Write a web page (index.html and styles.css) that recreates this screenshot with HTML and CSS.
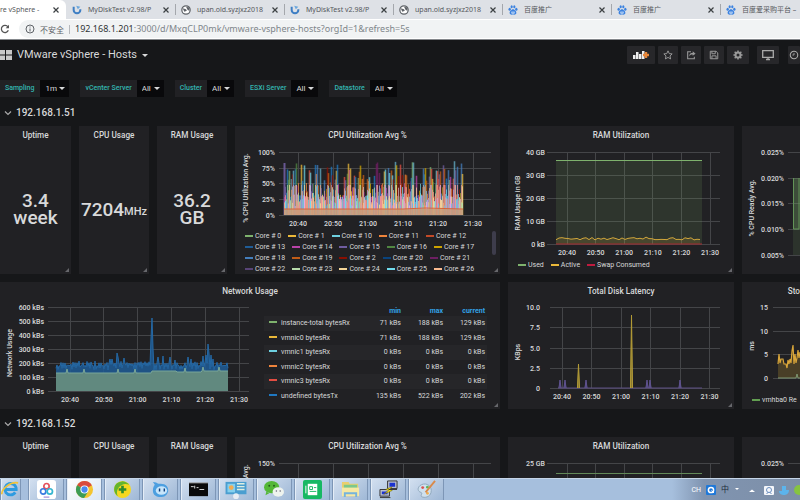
FILE: index.html
```html
<!DOCTYPE html>
<html lang="en">
<head>
<meta charset="utf-8">
<title>VMware vSphere - Hosts</title>
<link rel="stylesheet" href="styles.css">
</head>
<body>
<svg class="defs" aria-hidden="true">
  <symbol id="swirl" viewBox="0 0 12 12"><path d="M2 2v4a4 4 0 0 0 8 0V5" fill="none" stroke="#3f7fc4" stroke-width="2.4"/><path d="M5 1l5 1-3 3z" fill="#6aa7dd"/></symbol>
  <symbol id="globe" viewBox="0 0 12 12"><circle cx="6" cy="6" r="5" fill="#fff" stroke="#5f6368" stroke-width="1.5"/><path d="M2 4l4 1 1 2-3 1zM6 2l4 1v4L8 6z" fill="#5f6368"/></symbol>
  <symbol id="paw" viewBox="0 0 12 12"><g fill="#3b82e0"><ellipse cx="2" cy="5.2" rx="1.4" ry="1.8"/><ellipse cx="4.4" cy="2.2" rx="1.3" ry="1.8"/><ellipse cx="7.6" cy="2.2" rx="1.3" ry="1.8"/><ellipse cx="10" cy="5.2" rx="1.4" ry="1.8"/><path d="M6 5c2 0 4.500 3 4 5s-2.500 1.500-4 1.500S2.500 12 2 10s2-5 4-5z"/></g><path d="M4.500 8.500h3M4.500 8v2h3V8" fill="none" stroke="#fff" stroke-width=".7"/></symbol>
  <symbol id="close" viewBox="0 0 8 8"><path d="M1.500 1.500l5 5M6.500 1.500l-5 5" stroke="#3c4043" stroke-width="1.200"/></symbol>
  <symbol id="chevron" viewBox="0 0 8 6"><path d="M1 1.500l3 3 3-3" fill="none" stroke="#aaa" stroke-width="1.200"/></symbol>
</svg>

<nav class="tabs" aria-label="Browser tabs">
  <a class="tab active" href="#"><span class="tab-text">re vSphere -</span><svg class="x"><use href="#close"/></svg></a>
  <a class="tab" href="#"><svg class="fav"><use href="#swirl"/></svg><span class="tab-text">MyDiskTest v2.98/P</span><svg class="x"><use href="#close"/></svg></a>
  <a class="tab" href="#"><svg class="fav"><use href="#globe"/></svg><span class="tab-text">upan.old.syzjxz2018</span><svg class="x"><use href="#close"/></svg></a>
  <a class="tab" href="#"><svg class="fav"><use href="#swirl"/></svg><span class="tab-text">MyDiskTest v2.98/P</span><svg class="x"><use href="#close"/></svg></a>
  <a class="tab" href="#"><svg class="fav"><use href="#globe"/></svg><span class="tab-text">upan.old.syzjxz2018</span><svg class="x"><use href="#close"/></svg></a>
  <a class="tab" href="#"><svg class="fav"><use href="#paw"/></svg><span class="tab-text">百度推广</span><svg class="x"><use href="#close"/></svg></a>
  <a class="tab" href="#"><svg class="fav"><use href="#paw"/></svg><span class="tab-text">百度推广</span><svg class="x"><use href="#close"/></svg></a>
  <a class="tab" href="#"><svg class="fav"><use href="#paw"/></svg><span class="tab-text">百度爱采购平台 –</span></a>
</nav>

<div class="address">
  <svg class="reload" viewBox="0 0 12 12"><path d="M9.500 3.500A4.300 4.300 0 1 0 10 7.500" fill="none" stroke="#555" stroke-width="1.500"/><path d="M10.800 1v4h-4z" fill="#555"/></svg>
  <div class="omnibox">
    <svg class="info" viewBox="0 0 10 10"><circle cx="5" cy="5" r="4" fill="none" stroke="#5f6368"/><path d="M5 4.500v3M5 2.500v1" stroke="#5f6368"/></svg>
    <span class="insecure">不安全</span>
    <span class="url"><b>192.168.1.201</b>:3000/d/MxqCLP0mk/vmware-vsphere-hosts?orgId=1&amp;refresh=5s</span>
  </div>
</div>

<main class="dash">
  <header class="top">
    <svg class="grid-icon" viewBox="0 0 12 12"><path d="M0 1h5v4.500H0zM6 1h6v4.500H6zM0 6.500h5V11H0zM6 6.500h6V11H6z" fill="#c8c8c8"/></svg>
    <h1>VMware vSphere - Hosts</h1><span class="caret"></span>
    <div class="tools">
      <button class="wide" aria-label="Add panel"><svg viewBox="0 0 18 10"><path d="M1 9V5h2.500v4zM4 9V2h2.500v7zM7 9V4h2.500v5zM10 9V1h2.500v8z" fill="#eee"/><path d="M14 2v6M11 5h6" stroke="#e8873a" stroke-width="2.400"/></svg></button>
      <button aria-label="Star"><svg viewBox="0 0 12 12"><path d="M6 1l1.500 3.300 3.500.4-2.600 2.400.7 3.600L6 8.900l-3.100 1.800.7-3.600L1 4.700l3.500-.4z" fill="none" stroke="#aaa"/></svg></button>
      <button aria-label="Share"><svg viewBox="0 0 12 12"><path d="M6 2H2v8.500h8V8" fill="none" stroke="#999" stroke-width="1.300"/><path d="M4 7.500C4 4 6 3.500 8 3.500V1.500L11.500 4.500 8 7V5.500C6 5.500 5 6 4 7.500z" fill="#999"/></svg></button>
      <button aria-label="Save"><svg viewBox="0 0 12 12"><path d="M1.500 1.500h7l2 2v7h-9zM3.500 1.500v3h4v-3M3.500 10.500v-3.500h5v3.500" fill="none" stroke="#999" stroke-width="1.200"/></svg></button>
      <button class="mid" aria-label="Settings"><svg viewBox="0 0 12 12"><circle cx="6" cy="6" r="3" fill="none" stroke="#999" stroke-width="2.400"/><path d="M6 .5v2M6 9.500v2M.5 6h2M9.500 6h2M2 2l1.500 1.500M8.500 8.500L10 10M10 2L8.500 3.500M3.500 8.500L2 10" stroke="#999" stroke-width="1.800"/></svg></button>
      <button class="apart" aria-label="Cycle view mode"><svg viewBox="0 0 12 12"><path d="M.7 1.700h10.600v6.600H.7zM4 10.500h4M6 8v2.500" fill="none" stroke="#aaa" stroke-width="1.300"/></svg></button>
      <button class="time" aria-label="Time range"><svg viewBox="0 0 12 12"><circle cx="6" cy="6" r="4.500" fill="none" stroke="#aaa" stroke-width="1.300"/><path d="M6 3.500V6h-2" fill="none" stroke="#aaa"/></svg></button>
    </div>
  </header>

  <form class="vars">
    <div class="var"><label for="v1">Sampling</label><span class="pick"><select id="v1"><option>1m</option></select></span></div>
    <div class="var"><label for="v2">vCenter Server</label><span class="pick"><select id="v2"><option>All</option></select></span></div>
    <div class="var"><label for="v3">Cluster</label><span class="pick"><select id="v3"><option>All</option></select></span></div>
    <div class="var"><label for="v4">ESXi Server</label><span class="pick"><select id="v4"><option>All</option></select></span></div>
    <div class="var"><label for="v5">Datastore</label><span class="pick"><select id="v5"><option>All</option></select></span></div>
  </form>

  <h2 class="row-title"><svg><use href="#chevron"/></svg>192.168.1.51</h2>
  <div class="panels">
    <section class="panel upper"><h3>Uptime</h3><p class="stat">3.4<br>week</p></section>
    <section class="panel upper"><h3>CPU Usage</h3><p class="stat">7204<small>MHz</small></p></section>
    <section class="panel upper"><h3>RAM Usage</h3><p class="stat">36.2<br>GB</p></section>
    <section class="panel upper"><h3>CPU Utilization Avg %</h3>
      <svg class="chart" id="cpu" viewBox="0 0 265 89"></svg>
      <div class="legend scroll"><ul id="cores"></ul><i class="thumb"></i></div>
    </section>
    <section class="panel upper"><h3>RAM Utilization</h3>
      <svg class="chart" id="ram" viewBox="0 0 226 118"></svg>
      <ul class="legend" id="ram-legend"></ul>
    </section>
    <section class="panel upper cut"><h3>&nbsp;</h3>
      <svg class="chart" id="ready" viewBox="0 0 58 132"></svg>
    </section>

    <section class="panel lower span4"><h3>Network Usage</h3>
      <div class="split">
        <svg class="chart" id="net" viewBox="0 0 260 110"></svg>
        <table>
          <thead><tr><th></th><th>min</th><th>max</th><th>current</th></tr></thead>
          <tbody id="net-rows"></tbody>
        </table>
      </div>
    </section>
    <section class="panel lower"><h3>Total Disk Latency</h3>
      <svg class="chart" id="disk" viewBox="0 0 226 110"></svg>
    </section>
    <section class="panel lower cut"><h3>Sto</h3>
      <svg class="chart" id="store" viewBox="0 0 58 97"></svg>
      <ul class="legend" id="store-legend"></ul>
    </section>
  </div>

  <h2 class="row-title"><svg><use href="#chevron"/></svg>192.168.1.52</h2>
  <div class="panels">
    <section class="panel upper"><h3>Uptime</h3></section>
    <section class="panel upper"><h3>CPU Usage</h3></section>
    <section class="panel upper"><h3>RAM Usage</h3></section>
    <section class="panel upper"><h3>CPU Utilization Avg %</h3><svg class="chart" id="cpu2" viewBox="0 0 265 89"></svg></section>
    <section class="panel upper"><h3>RAM Utilization</h3><svg class="chart" id="ram2" viewBox="0 0 226 118"></svg></section>
    <section class="panel upper cut"><h3>&nbsp;</h3><svg class="chart" id="ready2" viewBox="0 0 58 132"></svg></section>
  </div>
</main>

<footer class="taskbar">
  <button class="first" aria-label="Internet Explorer"><svg viewBox="0 0 20 20"><path d="M15 13a6 6 0 1 1 1-3H5" fill="none" stroke="#2e9be0" stroke-width="3"/><path d="M1 15C0 10 10 1 18 3" fill="none" stroke="#f0c33c" stroke-width="1.800"/></svg></button>
  <button aria-label="Cloud drive"><svg viewBox="0 0 20 20"><rect x="0" y="0" width="20" height="20" rx="3" fill="#fff"/><g fill="none" stroke-width="1.800"><circle cx="10" cy="6.500" r="2.800" stroke="#e5525e"/><circle cx="6.500" cy="12" r="2.800" stroke="#3a7be0"/><circle cx="13.500" cy="12" r="2.800" stroke="#35b6d0"/></g><path d="M7 18h6" stroke="#8a6fd0"/></svg></button>
  <button class="on" aria-label="Chrome"><svg viewBox="0 0 20 20"><circle cx="10" cy="10" r="9" fill="#f4c530"/><path d="M10 10L2.200 5.500A9 9 0 0 1 17.800 5.500z" fill="#d94b3e"/><path d="M10 10L2.200 5.500A9 9 0 0 0 9.500 19L14 12z" fill="#3b9b56"/><circle cx="10" cy="10" r="4.300" fill="#fff"/><circle cx="10" cy="10" r="3.300" fill="#4a8af0"/></svg></button>
  <button aria-label="Security"><svg viewBox="0 0 20 20"><circle cx="10" cy="10" r="9" fill="#f5d820"/><path d="M2 6a9 9 0 0 1 15-1 10 10 0 0 0-11 3 9 9 0 0 0-1 9A9 9 0 0 1 2 6z" fill="#63b52e"/><path d="M10 6v8M6 10h8" stroke="#2f8c2a" stroke-width="2.800"/></svg></button>
  <button aria-label="Chat"><svg viewBox="0 0 20 20"><path d="M2 2c3 0 4 1 6 2 7-1 11 3 10 8-1 4-4 6-8 6s-8-2-8-7c0-3 1-5 2-6z" fill="#4d9fe0"/><ellipse cx="11" cy="11" rx="6" ry="4.500" fill="#c7e5fa"/><path d="M9 9v3M14 9v3" stroke="#123c78" stroke-width="1.500"/></svg></button>
  <button aria-label="Command prompt"><svg viewBox="0 0 20 20"><path d="M0 3h20v14H0z" fill="#0a0a0a"/><path d="M0 3h20" stroke="#aaa"/><path d="M2 7h3M6 6v3M8 8h2M11 10h5" stroke="#ddd"/></svg></button>
  <button aria-label="Control panel"><svg class="big" viewBox="0 0 22 20"><path d="M0 2h22v13H0z" fill="#4a9ed0"/><path d="M2 4h8v9H2z" fill="#85d0ee"/><path d="M12 4h8M12 7h8M12 10h8" stroke="#e0efe0" stroke-width="1.500"/><circle cx="6" cy="8" r="2.500" fill="#f2ab52"/><circle cx="11" cy="17" r="3" fill="#e9eef4"/></svg></button>
  <button aria-label="WeChat"><svg class="big" viewBox="0 0 22 20"><ellipse cx="8.500" cy="7.500" rx="8" ry="6.500" fill="#55b838"/><path d="M3 12l-1 4 4-2" fill="#55b838"/><circle cx="6" cy="6" r="1" fill="#24581a"/><circle cx="11" cy="6" r="1" fill="#24581a"/><ellipse cx="15.500" cy="12.500" rx="6" ry="5" fill="#eef3ee"/><circle cx="13.500" cy="11.500" r=".8" fill="#667"/><circle cx="17.500" cy="11.500" r=".8" fill="#667"/></svg></button>
  <button aria-label="Notes"><svg viewBox="0 0 20 20"><rect width="20" height="20" rx="2" fill="#17b863"/><path d="M5 4h10v12H5z" fill="#fff"/><path d="M7 7h3v3H7zM11.500 8H14M7 12h7" stroke="#17b863" fill="none"/><path d="M3 6v8" stroke="#fff"/></svg></button>
  <button aria-label="Explorer"><svg viewBox="0 0 20 20"><path d="M1 2h7l1 2h9v13H1z" fill="#e9cf6d"/><path d="M3 5h14v5H3z" fill="#7cc88c"/><path d="M1 8h18v9H1z" fill="#f6e8a4"/><path d="M4 18v-4h12v4" fill="none" stroke="#74b3dc" stroke-width="2"/></svg></button>
  <button aria-label="PuTTY"><svg viewBox="0 0 20 20"><path d="M9 1h10v8H9zM1 10h10v7H1z" fill="#b9bfcf" stroke="#333"/><path d="M11 3h6v4h-6zM3 12h6v3H3z" fill="#1b33d0"/><path d="M14 7L7 10l3 1-5 4 9-4-3-1z" fill="#f8e71c" stroke="#665c00" stroke-width=".5"/><path d="M1 18.500h11M10 10h9" stroke="#333"/></svg></button>
  <button aria-label="Paint"><svg viewBox="0 0 20 20"><path d="M3 6c5-4 12-1 12 5s-5 8-9 7 1-4-2-5-4-4-1-7z" fill="#cfe0ee" stroke="#8ea6bc"/><circle cx="6" cy="8" r="1.500" fill="#d9534f"/><circle cx="11" cy="7.500" r="1.500" fill="#5cb85c"/><circle cx="11" cy="14" r="1.500" fill="#f0ad4e"/><path d="M19 1L9 13" stroke="#d98a4a" stroke-width="2"/></svg></button>
  <div class="tray">
    <span>CH</span>
    <svg viewBox="0 0 10 10"><rect width="10" height="10" rx="1" fill="#1f78d8"/><circle cx="5" cy="5" r="2.600" fill="none" stroke="#fff" stroke-width="1.500"/><path d="M5.500 5.500L8 8" stroke="#fff"/></svg>
    <span class="dark">中</span>
    <svg class="tiny" viewBox="0 0 6 10"><path d="M1 3h4L3 5z" fill="#fff"/></svg>
    <svg class="tiny up" viewBox="0 0 6 10"><path d="M0 7h6L3 4.500z" fill="#fff"/></svg>
    <svg viewBox="0 0 10 10"><rect y="1" width="10" height="9" rx="1" fill="#f4f6fa"/><circle cx="5" cy="5" r="2.500" fill="none" stroke="#6b8fc0"/><path d="M2.500 9l2-2M7.500 9l-2-2" stroke="#6b8fc0"/></svg>
    <svg viewBox="0 0 10 10"><path d="M3 1h4v4h3c0 4-3 5-5 5S0 9 0 6h3z" fill="#5cb4ec"/></svg>
    <svg class="tiny" viewBox="0 0 6 10"><circle cx="5" cy="5" r="5" fill="#86c440"/></svg>
  </div>
</footer>
<script src="charts.js"></script>
</body>
</html>
```
FILE: styles.css
```css
* { box-sizing: border-box; }
body {
  margin: 0;
  height: 100vh;
  display: flex;
  flex-direction: column;
  overflow: hidden;
  background: #161719;
  color: #d8d9da;
  font: 7px/10px Roboto, "Noto Sans CJK SC", sans-serif;
}
h1, h2, h3, p, ul { margin: 0; padding: 0; font-weight: 400; list-style: none; }
button { border: 0; padding: 0; font: inherit; }
.defs { display: none; }

.tabs {
  flex: none;
  display: flex;
  height: 19px;
  background: #dee1e6;
  font-family: "Noto Sans", "Noto Sans CJK SC", sans-serif;
}
.tab {
  flex: 0 0 109px;
  display: flex;
  align-items: center;
  gap: 6px;
  padding: 0 5px 0 6px;
  color: #55585c;
  text-decoration: none;
  position: relative;
}
.tab:nth-child(n+3)::before { content: ""; position: absolute; left: 0; top: 4px; height: 11px; border-left: 1px solid #a4a7ac; }
.tab.active { flex-basis: 66px; background: #fff; border-radius: 0 6px 0 0; padding-left: 0; padding-right: 6px; }
.tab-text { flex: 1; overflow: hidden; white-space: nowrap; }
.fav { width: 10px; height: 10px; flex: none; }
.x { width: 8px; height: 8px; flex: none; }

.address {
  flex: none;
  display: flex;
  align-items: center;
  gap: 9px;
  height: 21px;
  background: #fff;
  border-bottom: 1px solid #85888c;
}
.reload { width: 10px; height: 12px; flex: none; }
.omnibox {
  flex: 1;
  height: 18px;
  display: flex;
  align-items: center;
  gap: 5px;
  padding-left: 6px;
  background: #f1f3f4;
  border-radius: 9px 0 0 9px;
  color: #80868b;
  font: 9px/12px "Noto Sans", "Noto Sans CJK SC", sans-serif;
  white-space: nowrap;
}
.omnibox b { font-weight: 400; color: #303336; }
.info { width: 10px; height: 10px; }
.insecure { font-size: 8px; padding-right: 5px; border-right: 1px solid #b5b8bc; line-height: 9px; color: #5f6368; }

.dash { flex: 1; min-height: 0; overflow: hidden; }
.top { display: flex; align-items: center; height: 30px; }
.grid-icon { width: 12px; height: 12px; margin-right: 5px; }
.top h1 { font-size: 11px; line-height: 14px; }
.caret { border: 3px solid transparent; border-top-color: #d8d9da; border-bottom: 0; margin-left: 5px; }
.tools { margin-left: auto; display: flex; gap: 3px; }
.tools button {
  width: 20px;
  height: 18px;
  display: grid;
  place-items: center;
  background: #27272a;
  border-radius: 1px;
}
.tools svg { width: 10px; height: 10px; }
.tools .wide { width: 28px; }
.tools .wide svg { width: 18px; }
.tools .mid { width: 22px; }
.tools .apart { margin: 0 6px 0 5px; width: 22px; }
.tools .apart svg { width: 12px; height: 12px; }
.tools .time { width: 12px; overflow: hidden; }

.vars { display: flex; gap: 11px; padding-top: 10px; height: 36px; }
.var { display: flex; height: 17px; line-height: 17px; }
.var label { background: #212124; color: #33b5b0; padding: 0 5px; font-weight: 500; }
.var:first-child label { padding-right: 6px; }
.pick { position: relative; background: #09090b; }
.pick::after { content: ""; position: absolute; right: 4px; top: 7px; border: 3px solid transparent; border-top-color: #d8d9da; border-bottom: 0; pointer-events: none; }
.pick select { appearance: none; border: 0; background: none; color: #d8d9da; font: 8px/17px Roboto, sans-serif; padding: 0 12px 0 5px; height: 17px; display: block; }

.row-title { display: flex; align-items: center; gap: 4px; height: 14px; padding-left: 4px; font-size: 10px; font-weight: 500; line-height: 14px; margin-bottom: 6px; }
.row-title svg { width: 8px; height: 6px; }
.panels { display: grid; grid-template-columns: 71fr 70fr 70fr 265fr 226fr 58fr; gap: 8px; margin-bottom: 8px; }
.panel { position: relative; min-width: 0; overflow: hidden; background: #212124; display: flex; flex-direction: column; }
.upper { height: 148px; }
.lower { height: 127px; }
.span4 { grid-column: span 4; }
.panel::after { content: ""; position: absolute; right: 2px; bottom: 2px; border: 2px solid transparent; border-right-color: #66676b; border-bottom-color: #66676b; }
.cut::after { display: none; }
.panel h3 { flex: none; height: 16px; line-height: 18px; text-align: center; font-weight: 500; white-space: nowrap; }
.cut h3 { text-align: right; }
.stat { flex: 1; display: flex; align-items: center; justify-content: center; text-align: center; font-size: 19px; line-height: 17px; font-weight: 500; padding-top: 2px; }
.stat small { font-size: 11px; padding-top: 4px; }

.chart { display: block; width: 100%; flex: none; }
.chart text { fill: #d8d9da; font-size: 7px; font-weight: 500; }
.chart .grid { stroke: #444548; stroke-width: 1; shape-rendering: crispEdges; }
.chart .series { fill: none; }

.legend { display: flex; flex-wrap: wrap; gap: 0 7px; padding-left: 10px; white-space: nowrap; }
.legend li { display: flex; align-items: center; gap: 2px; }
.swatch { width: 8px; height: 2px; flex: none; }
.scroll { flex-wrap: nowrap; }
.scroll ul { display: flex; flex-wrap: wrap; gap: 1px 7px; width: 240px; }
.thumb { width: 4px; height: 24px; border-radius: 2px; background: #3e3d4c; }

.split { flex: 1; display: grid; grid-template-columns: 260fr 240fr; min-height: 0; }
.split table { border-collapse: collapse; width: calc(100% - 17px); height: 97px; margin: 8px 13px 0 4px; table-layout: fixed; }
.split th, .split td { padding: 0 2px 0 0; text-align: right; font-weight: 400; white-space: nowrap; }
.split th { color: #33a2e5; font-weight: 700; height: 10px; }
.split th:first-child { width: 96px; }
.split th:nth-child(n+3) { width: 42px; }
.split td:first-child { text-align: left; }
.split tbody tr:nth-child(odd) { background: #262629; }
.split .swatch { display: inline-block; margin: 0 4px 2px 5px; }

.taskbar {
  flex: none;
  display: flex;
  gap: 2px;
  height: 22px;
  background: linear-gradient(90deg, #a6bfdd 0 84%, #8094b0 88%, #7d8fa8);
  border-top: 1px solid #c5d5e8;
}
.taskbar button {
  width: 36px;
  display: grid;
  place-items: center;
  background: linear-gradient(135deg, #d3e0f0, #9fb8d6);
  border: 1px solid #7d96b6;
  border-width: 0 1px;
  box-shadow: inset 1px 0 #e4edf7;
  overflow: hidden;
}
.taskbar .first { width: 21px; margin-right: 5px; padding-right: 6px; }
.taskbar .on { background: linear-gradient(135deg, #fff, #d9e6f4); }
.taskbar button svg { width: 19px; height: 19px; }
.taskbar button .big { width: 22px; }
.tray { margin-left: auto; display: flex; align-items: center; gap: 5px; color: #fff; overflow: hidden; }
.tray svg { width: 10px; height: 10px; flex: none; }
.tray .tiny { width: 6px; }
.tray .up { margin: 0 4px; }
.tray .dark { color: #222c3a; font-size: 8px; }
```
FILE: charts.js
```js
const NS = 'http://www.w3.org/2000/svg';
const TIMES = ['20:40', '20:50', '21:00', '21:10', '21:20', '21:30'];

let seed = 11;
function rand() {
  seed = (seed * 16807) % 2147483647;
  return seed / 2147483647;
}

function el(parent, name, attrs, text) {
  const node = document.createElementNS(NS, name);
  for (const key in attrs) node.setAttribute(key, attrs[key]);
  if (text) node.textContent = text;
  parent.appendChild(node);
  return node;
}

// Draws grid, tick labels and the rotated axis title; returns the svg.
function axes(id, o) {
  const svg = document.getElementById(id);
  o.ys.forEach(([y, label]) => {
    el(svg, 'line', { class: 'grid', x1: o.left, x2: o.right, y1: y, y2: y });
    el(svg, 'text', { x: o.labelX, y: y + 3, 'text-anchor': 'end' }, label);
  });
  if (o.first) {
    TIMES.forEach((t, i) => {
      const x = o.first + i * o.step;
      el(svg, 'line', { class: 'grid', x1: x, x2: x, y1: o.ys[0][0], y2: o.bottom });
      el(svg, 'text', { x: x, y: o.bottom + 11, 'text-anchor': 'middle' }, t);
    });
  }
  if (o.title) {
    el(svg, 'text', { transform: `translate(${o.titleX} ${o.titleY}) rotate(-90)`, 'text-anchor': 'middle' }, o.title);
  }
  return svg;
}

function line(svg, pts, color, width = 1) {
  el(svg, 'polyline', { class: 'series', points: pts.map(p => p.join()).join(' '), stroke: color, 'stroke-width': width });
}

function area(svg, pts, base, color, opacity) {
  const all = [[pts[0][0], base], ...pts, [pts[pts.length - 1][0], base]];
  el(svg, 'polygon', { points: all.map(p => p.join()).join(' '), fill: color, 'fill-opacity': opacity });
}

// CPU utilization
const cpu = axes('cpu', {
  left: 44, right: 256, labelX: 40, first: 63, step: 35, bottom: 73,
  ys: [[10, '100%'], [26, '75%'], [41, '50%'], [57, '25%'], [73, '0%']],
  title: '% CPU Utilization Avg.', titleX: 13, titleY: 46
});
const vivid = ['#7eb26d', '#eab839', '#6ed0e0', '#ef843c', '#e24d42', '#1f78c1', '#ba43a9', '#705da0', '#508642', '#cca300', '#447ebc', '#c15c17', '#890f02', '#6d1f62', '#64b0c8'];
const pale = ['#b7dbab', '#f4d598', '#70dbed', '#f9ba8f', '#f29191', '#82b5d8', '#e5a8e2', '#aea2e0', '#e0a088', '#cdb6c0'];
const pick = list => list[Math.floor(rand() * list.length)];
const bar = (x, h, color, o, w = 1) => el(cpu, 'line', { x1: x, x2: x, y1: 73, y2: 73 - h, stroke: color, 'stroke-width': w, 'stroke-opacity': o });
bar(49.5, 52, '#705da0', .9, 2);
for (let i = 0; i < 179; i++) {
  const x = 49 + i + .5;
  const peak = 18 + Math.pow(rand(), 1.4) * 36;
  bar(x, peak, pick(vivid), .75, peak > 34 ? 1.6 : 1);
  bar(x, Math.min(peak * .7, 30), pick(pale), .75);
  bar(x, 9 + rand() * 11, pick(pale), .9);
}
el(cpu, 'rect', { x: 49, y: 67, width: 179, height: 6, fill: '#c99a78', 'fill-opacity': .85 });
line(cpu, [[49, 67], [168, 67], [190, 66], [228, 67]], '#d8643a');

axes('cpu2', { left: 44, right: 256, labelX: 40, first: 63, step: 35, bottom: 73, ys: [[10, '150%'], [41, '100%']], title: '% CPU Utilization Avg.', titleX: 13, titleY: 46 });

// RAM utilization
const ram = axes('ram', {
  left: 39, right: 212, labelX: 37, first: 59, step: 28.6, bottom: 102,
  ys: [[10, '40 GB'], [33, '30 GB'], [56, '20 GB'], [79, '10 GB'], [102, '0 kB']],
  title: 'RAM Usage in GB', titleX: 12, titleY: 61
});
const used = [[48, 18.5], [194, 18.5]];
area(ram, used, 102, '#7eb26d', .14);
line(ram, used, '#7eb26d');
const active = [];
for (let x = 48; x <= 194; x += 3) active.push([x, 98 - rand() * 2.5 - (rand() > .85 ? 1.5 : 0)]);
area(ram, active, 102, '#eab839', .14);
line(ram, active, '#d1a73c');
line(ram, [[48, 102], [194, 102]], '#a52a30');

const ram2 = axes('ram2', { left: 39, right: 212, labelX: 37, first: 59, step: 28.6, bottom: 102, ys: [[10, '25 GB'], [33, '20 GB']] });
line(ram2, [[48, 20.5], [194, 20.5]], '#638958');

// CPU ready
const ready = axes('ready', {
  left: 46, right: 58, labelX: 42, bottom: 113,
  ys: [[10, '0.025%'], [36, '0.020%'], [61, '0.015%'], [87, '0.010%'], [113, '0.005%']],
  title: '% CPU Ready Avg.', titleX: 12, titleY: 66
});
area(ready, [[51, 87], [58, 87]], 113, '#7eb26d', .12);
area(ready, [[51, 36], [58, 36]], 87, '#7eb26d', .3);
line(ready, [[51.5, 36], [51.5, 87], [57, 87], [57, 36]], '#629457');
axes('ready2', { left: 46, right: 58, labelX: 42, bottom: 113, ys: [[10, '0.025%'], [36, '0.020%']] });

// Network usage
const net = axes('net', {
  left: 48, right: 249, labelX: 44, first: 70, step: 33.8, bottom: 93,
  ys: [[9, '600 kBs'], [23, '500 kBs'], [37, '400 kBs'], [51, '300 kBs'], [65, '200 kBs'], [79, '100 kBs'], [93, '0 kBs']],
  title: 'Network Usage', titleX: 12, titleY: 55
});
const spikes = { 110: 61, 112: 61, 117: 55, 118: 59, 124: 60, 151: 40, 152: 20, 153: 50, 158: 59, 163: 58, 170: 59, 175: 62, 188: 59, 191: 61, 203: 58, 206: 57, 208: 46, 209: 55, 211: 57, 213: 61 };
const tx = [], rx = [];
for (let x = 56; x <= 228; x++) {
  tx.push([x, spikes[x] || (x % 2 ? 63 + rand() * 5 : 67 + rand() * 5)]);
  rx.push([x, (x < 152 ? 75 : 73) + (x > 176 && x < 202 ? 1 : 0) - ([67, 84, 118, 135, 185, 203, 219].includes(x) ? 4 : 0)]);
}
area(net, tx, 93, '#1f5c96', .85);
line(net, tx, '#2468a5');
area(net, rx, 93, '#61897f', 1);
line(net, rx, '#79a69a');

// Disk latency
const disk = axes('disk', {
  left: 42, right: 212, labelX: 32, first: 54, step: 29.5, bottom: 90,
  ys: [[9, '10.0'], [29, '7.5'], [50, '5.0'], [70, '2.5'], [90, '0']],
  title: 'KBps', titleX: 12, titleY: 54
});
line(disk, [[50, 90], [194, 90]], '#5c4f85');
const spike = (x, y, color) => {
  area(disk, [[x - 1.5, 90], [x, y], [x + 1.5, 90]], 90, color, .7);
  line(disk, [[x - 1, 90], [x, y], [x + 1, 90]], color);
};
[52, 57, 78, 139, 142, 172].forEach(x => spike(x, 82, '#5f5290'));
spike(70.5, 66, '#b39b36');
spike(123.5, 17, '#b39b36');

// Storage latency
const store = axes('store', {
  left: 31, right: 58, labelX: 26, bottom: 80,
  ys: [[9, '15'], [33, '10'], [56, '5'], [80, '0']],
  title: 'ms', titleX: 12, titleY: 48
});
const ms = [[36, 66], [37, 56], [38, 65], [39, 61], [41, 61], [42, 66], [43, 66], [44, 66], [45, 70], [46, 62], [47, 66], [48, 61], [49, 65], [50, 53], [51, 47], [52, 66], [53, 56], [54, 65], [55, 60], [56, 52], [57, 60], [58, 54]];
area(store, ms, 80, '#eab839', .2);
line(store, ms, '#d9a63a', 1.2);
line(store, [[36, 80], [54, 80], [55, 76], [56, 80], [58, 80]], '#7e9872');

// Legends
function legend(id, items) {
  document.getElementById(id).innerHTML = items
    .map(([name, color]) => `<li><i class="swatch" style="background:${color}"></i>${name}</li>`).join('');
}
legend('ram-legend', [['Used', '#7eb26d'], ['Active', '#eab839'], ['Swap Consumed', '#bf1b3f']]);
legend('store-legend', [['vmhba0 Re', '#629e51']]);
legend('cores', [
  [0, '#7eb26d'], [1, '#eab839'], [10, '#6ed0e0'], [11, '#ef843c'], [12, '#c24a28'],
  [13, '#1f5c96'], [14, '#ba43a9'], [15, '#705da0'], [16, '#508642'], [17, '#cca300'],
  [18, '#447ebc'], [19, '#c15c17'], [2, '#890f02'], [20, '#0a437c'], [21, '#6d1f62'],
  [22, '#584477'], [23, '#b7dbab'], [24, '#f4d598'], [25, '#70dbed'], [26, '#f9ba8f']
].map(([n, c]) => ['Core # ' + n, c]));

document.getElementById('net-rows').innerHTML = [
  ['instance-total bytesRx', '#7eb26d', 71, 188, 129],
  ['vmnic0 bytesRx', '#eab839', 71, 188, 129],
  ['vmnic1 bytesRx', '#6ed0e0', 0, 0, 0],
  ['vmnic2 bytesRx', '#ef843c', 0, 0, 0],
  ['vmnic3 bytesRx', '#e24d42', 0, 0, 0],
  ['undefined bytesTx', '#1f78c1', 135, 522, 202]
].map(([name, color, ...v]) =>
  `<tr><td><i class="swatch" style="background:${color}"></i>${name}</td>${v.map(n => `<td>${n} kBs</td>`).join('')}</tr>`).join('');
```
